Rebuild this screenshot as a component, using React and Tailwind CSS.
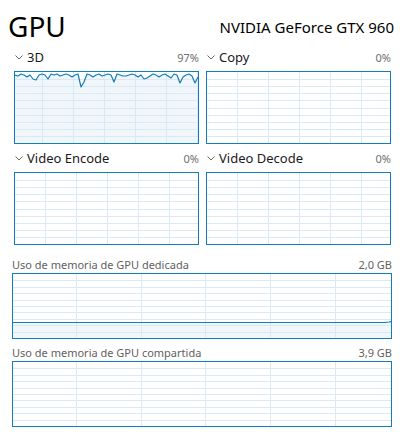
import React from "react";

const BLUE = "#117DBB";
const GRID = "#D9EAF4";
const FILL = "#F1F6FA";

function Chevron() {
  return (
    <svg width="8" height="5" viewBox="0 0 8 5" className="shrink-0">
      <polyline points="0.5,0.5 4,4 7.5,0.5" fill="none" stroke="#6b6b6b" strokeWidth="1" />
    </svg>
  );
}

// grid + optional data line
function Graph({ w, h, cols, xOff, data }) {
  const rows = 10;
  const vlines = [];
  for (let x = xOff; x < w; x += cols) vlines.push(Math.round(x) + 0.5);
  const hlines = [];
  for (let i = 1; i < rows; i++) hlines.push(Math.round((h / rows) * i) + 0.5);
  const pts = data ? data.map(([x, y]) => `${x},${y}`).join(" ") : "";

  return (
    <div className="border border-[#117DBB] bg-white" style={{ width: w + 2, height: h + 2 }}>
      <svg width={w} height={h} className="block">
        {data && <polygon points={`0,${h} ${pts} ${w},${h}`} fill={FILL} />}
        {hlines.map((y) => (
          <line key={"h" + y} x1="0" x2={w} y1={y} y2={y} stroke={GRID} strokeWidth="1" />
        ))}
        {vlines.map((x) => (
          <line key={"v" + x} x1={x} x2={x} y1="0" y2={h} stroke={GRID} strokeWidth="1" />
        ))}
        {data && <polyline points={pts} fill="none" stroke={BLUE} strokeWidth="1.2" strokeLinejoin="round" />}
      </svg>
    </div>
  );
}

// 3D utilization: pinned near the top with a few dips
const dips = { 6: 5, 7: 4, 11: 3, 22: 12, 23: 6, 33: 6, 36: 2, 43: 5, 44: 3, 52: 3, 55: 7, 56: 3, 60: 8, 61: 3 };
const wiggle = [2, 3, 1, 2, 4, 2, 1, 3, 2, 1, 2, 3, 1, 2, 1, 3, 2, 1, 2, 4, 2, 1];
const d3 = [];
for (let i = 0; i <= 61; i++) {
  const base = 1 + wiggle[i % wiggle.length];
  d3.push([Math.min(i * 3, 183), dips[i] !== undefined ? base + dips[i] : base]);
}

const dedicated = [
  [0, 48.5],
  [372, 48.5],
  [376, 48],
  [379, 47.5],
];

function SmallPanel({ title, value, data, xOff }) {
  return (
    <div className="flex flex-col">
      <div className="flex items-center h-[19px] pl-[1px]">
        <Chevron />
        <span className="ml-[4px] text-[13px] text-[#1a1a1a] leading-none">{title}</span>
        <span className="ml-auto text-[11px] text-[#6e6e6e] leading-none">{value}</span>
      </div>
      <div className="mt-[4px]">
        <Graph w={183} h={71} cols={31} xOff={xOff} data={data} />
      </div>
    </div>
  );
}

function MemPanel({ title, value, data }) {
  return (
    <div className="flex flex-col">
      <div className="flex items-center h-[14px] text-[11px] text-[#5f5f5f] leading-none">
        <span>{title}</span>
        <span className="ml-auto">{value}</span>
      </div>
      <div className="mt-[2px]">
        <Graph w={378} h={64} cols={64.7} xOff={63} data={data} />
      </div>
    </div>
  );
}

export default function App() {
  return (
    <div className="w-[402px] h-[432px] bg-white overflow-hidden font-['Segoe_UI','Noto_Sans',sans-serif]">
      <div className="flex items-end justify-between pl-[8px] pr-[8px] pt-[6px] h-[40px]">
        <span className="text-[28px] leading-none text-black">GPU</span>
        <span className="text-[15px] leading-none text-black mb-[5px]">NVIDIA GeForce GTX 960</span>
      </div>
      <div className="pl-[14px] pr-[10px] mt-[8px]">
        <div className="grid grid-cols-[185px_185px] gap-x-[7px] gap-y-[5px]">
          <SmallPanel title="3D" value="97%" data={d3} xOff={27} />
          <SmallPanel title="Copy" value="0%" xOff={30} />
          <SmallPanel title="Video Encode" value="0%" xOff={30} />
          <SmallPanel title="Video Decode" value="0%" xOff={30} />
        </div>
      </div>
      <div className="pl-[12px] pr-[10px] mt-[12px] flex flex-col gap-[6px]">
        <MemPanel title="Uso de memoria de GPU dedicada" value="2,0 GB" data={dedicated} />
        <MemPanel title="Uso de memoria de GPU compartida" value="3,9 GB" />
      </div>
    </div>
  );
}
